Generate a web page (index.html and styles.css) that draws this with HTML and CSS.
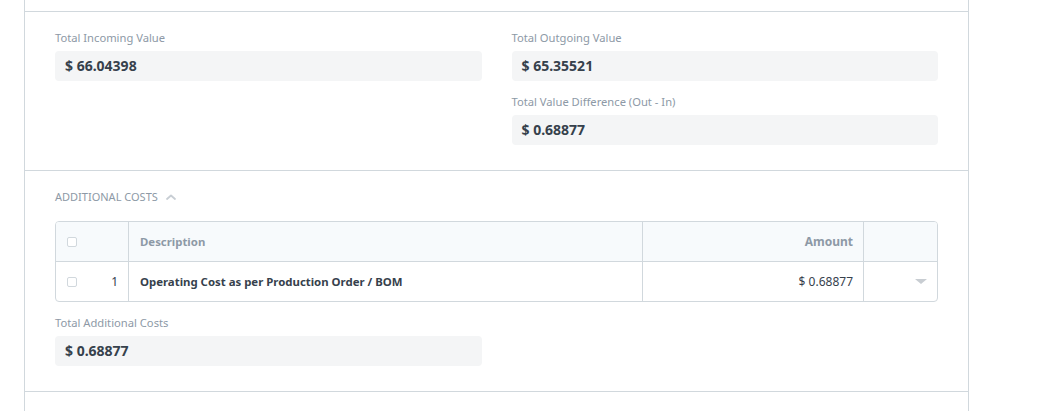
FILE: index.html
```html
<!DOCTYPE html>
<html lang="en">
<head>
    <meta charset="UTF-8">
    <meta name="viewport" content="width=device-width, initial-scale=1.0">
    <title>Stock Entry - Values</title>
    <link rel="stylesheet" href="styles.css">
</head>
<body>
    <div class="form">
        <div class="section section-prev"></div>

        <div class="section">
            <div class="columns">
                <div class="column">
                    <div class="field">
                        <div class="field-label">Total Incoming Value</div>
                        <div class="field-value">$ 66.04398</div>
                    </div>
                </div>
                <div class="column">
                    <div class="field">
                        <div class="field-label">Total Outgoing Value</div>
                        <div class="field-value">$ 65.35521</div>
                    </div>
                    <div class="field">
                        <div class="field-label">Total Value Difference (Out - In)</div>
                        <div class="field-value">$ 0.68877</div>
                    </div>
                </div>
            </div>
        </div>

        <div class="section">
            <div class="section-head">
                ADDITIONAL COSTS
                <svg class="chevron" width="12" height="8" viewBox="0 0 12 8">
                    <path d="M2 6 L6 2.5 L10 6" fill="none" stroke="#c8ced4" stroke-width="1.8" stroke-linecap="round" stroke-linejoin="round"/>
                </svg>
            </div>

            <div class="grid">
                <div class="grid-row grid-head">
                    <div class="cell cell-idx"><span class="check"></span></div>
                    <div class="cell cell-desc">Description</div>
                    <div class="cell cell-amount">Amount</div>
                    <div class="cell cell-menu"></div>
                </div>
                <div class="grid-row">
                    <div class="cell cell-idx"><span class="check"></span><span class="idx">1</span></div>
                    <div class="cell cell-desc">Operating Cost as per Production Order / BOM</div>
                    <div class="cell cell-amount">$ 0.68877</div>
                    <div class="cell cell-menu"><span class="caret"></span></div>
                </div>
            </div>

            <div class="field field-total">
                <div class="column-half">
                    <div class="field-label">Total Additional Costs</div>
                    <div class="field-value">$ 0.68877</div>
                </div>
            </div>
        </div>

        <div class="section section-next"></div>
    </div>
</body>
</html>
```

FILE: styles.css
```css
* {
    margin: 0;
    padding: 0;
    box-sizing: border-box;
}

body {
    font-family: 'Noto Sans', 'Open Sans', sans-serif;
    background: white;
    color: #36414c;
}

.form {
    margin-left: 24px;
    width: 945px;
    border-left: 1px solid #d1d8dd;
    border-right: 1px solid #d1d8dd;
}

.section {
    border-bottom: 1px solid #d1d8dd;
    padding: 17px 30px 25px;
}

.section-prev {
    height: 12px;
    padding: 0;
}

.section-next {
    height: 40px;
    border-bottom: none;
}

.columns {
    display: grid;
    grid-template-columns: 1fr 1fr;
    gap: 30px;
}

.field + .field {
    margin-top: 12px;
}

.field-label {
    font-size: 11.2px;
    line-height: 18px;
    color: #8d99a6;
    margin-bottom: 4px;
}

.field-value {
    height: 30px;
    line-height: 30px;
    padding: 0 10px;
    background: #f4f5f6;
    border-radius: 4px;
    font-size: 14px;
    font-weight: bold;
    color: #36414c;
}

.section-head {
    display: flex;
    align-items: center;
    gap: 7px;
    font-size: 11px;
    line-height: 18px;
    color: #8d99a6;
    margin-bottom: 15px;
}

.chevron {
    display: block;
}

.grid {
    border: 1px solid #d1d8dd;
    border-radius: 4px;
    overflow: hidden;
}

.grid-row {
    display: grid;
    grid-template-columns: 73px 514px 221px 1fr;
    height: 39px;
    font-size: 11.4px;
}

.grid-head {
    height: 40px;
    background: #f7fafc;
    border-bottom: 1px solid #d1d8dd;
    color: #8d99a6;
    font-weight: bold;
}

.cell {
    display: flex;
    align-items: center;
    padding: 0 10px;
    border-right: 1px solid #d1d8dd;
}

.cell-menu {
    border-right: none;
    justify-content: flex-end;
}

.cell-idx {
    padding-left: 11px;
    justify-content: space-between;
}

.grid-row .cell-desc {
    font-weight: bold;
    padding-left: 11px;
}

.grid-head .cell-desc {
    color: #8d99a6;
}

.cell-amount {
    justify-content: flex-end;
    font-size: 12px;
}

.check {
    width: 10px;
    height: 10px;
    border: 1px solid #d1d8dd;
    border-radius: 2px;
    background: white;
}

.idx {
    color: #36414c;
    font-weight: normal;
    font-size: 12px;
}

.caret {
    width: 0;
    height: 0;
    border-left: 6px solid transparent;
    border-right: 6px solid transparent;
    border-top: 5px solid #c8cdd2;
}

.field-total {
    margin-top: 12px;
}

.column-half {
    width: 427px;
}
```
